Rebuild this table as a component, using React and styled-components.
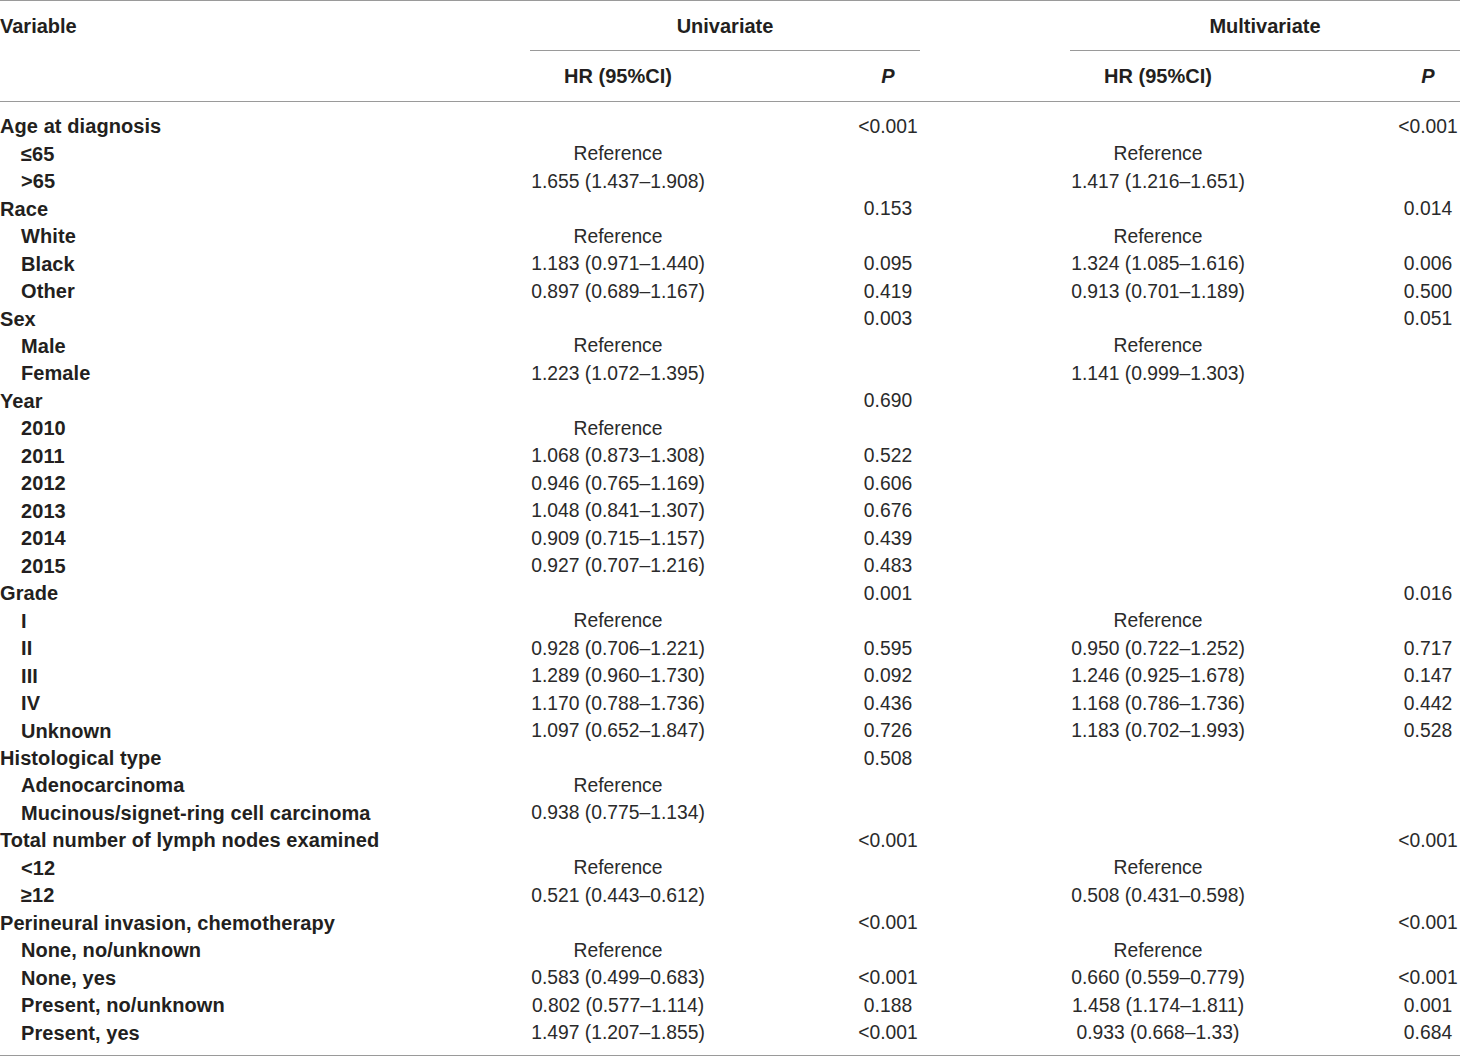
import React from 'react';
import styled, { createGlobalStyle } from 'styled-components';

const GlobalStyle = createGlobalStyle`
  html, body {
    margin: 0;
    padding: 0;
    background: #ffffff;
  }
  body {
    font-family: "Liberation Sans", Arial, Helvetica, sans-serif;
    color: #231f20;
  }
`;

const COLS = '530px 176px 150px 64px 150px 176px 150px 64px';

const Table = styled.div`
  width: 1460px;
  border-top: 1px solid #9a9a9a;
  border-bottom: 1px solid #9a9a9a;
`;

const HeadRow = styled.div`
  display: grid;
  grid-template-columns: ${COLS};
  height: ${(p) => p.h}px;
  border-bottom: ${(p) => (p.ruled ? '1px solid #9a9a9a' : 'none')};
`;

const HeadCell = styled.div`
  grid-column: ${(p) => p.col};
  display: flex;
  align-items: center;
  justify-content: ${(p) => (p.left ? 'flex-start' : 'center')};
  font-size: 20px;
  font-weight: 700;
  font-style: ${(p) => (p.italic ? 'italic' : 'normal')};
  white-space: nowrap;
  padding-top: 1px;
  border-bottom: ${(p) => (p.ruled ? '1px solid #9a9a9a' : 'none')};
`;

const Body = styled.div`
  padding: 11px 0 8px;
`;

const Row = styled.div`
  display: grid;
  grid-template-columns: ${COLS};
  height: 27.48px;
  align-items: center;
`;

const Label = styled.div`
  grid-column: 1;
  padding-left: ${(p) => (p.sub ? 21 : 0)}px;
  font-size: 20px;
  font-weight: 700;
  letter-spacing: 0.08px;
  white-space: nowrap;
`;

const Value = styled.div`
  grid-column: ${(p) => p.col};
  display: flex;
  justify-content: center;
  font-size: 19.3px;
  color: #2a2a2a;
  white-space: nowrap;
`;

const R = 'Reference';

const rows = [
  ['Age at diagnosis', 0, '', '<0.001', '', '<0.001'],
  ['≤65', 1, R, '', R, ''],
  ['>65', 1, '1.655 (1.437–1.908)', '', '1.417 (1.216–1.651)', ''],
  ['Race', 0, '', '0.153', '', '0.014'],
  ['White', 1, R, '', R, ''],
  ['Black', 1, '1.183 (0.971–1.440)', '0.095', '1.324 (1.085–1.616)', '0.006'],
  ['Other', 1, '0.897 (0.689–1.167)', '0.419', '0.913 (0.701–1.189)', '0.500'],
  ['Sex', 0, '', '0.003', '', '0.051'],
  ['Male', 1, R, '', R, ''],
  ['Female', 1, '1.223 (1.072–1.395)', '', '1.141 (0.999–1.303)', ''],
  ['Year', 0, '', '0.690', '', ''],
  ['2010', 1, R, '', '', ''],
  ['2011', 1, '1.068 (0.873–1.308)', '0.522', '', ''],
  ['2012', 1, '0.946 (0.765–1.169)', '0.606', '', ''],
  ['2013', 1, '1.048 (0.841–1.307)', '0.676', '', ''],
  ['2014', 1, '0.909 (0.715–1.157)', '0.439', '', ''],
  ['2015', 1, '0.927 (0.707–1.216)', '0.483', '', ''],
  ['Grade', 0, '', '0.001', '', '0.016'],
  ['I', 1, R, '', R, ''],
  ['II', 1, '0.928 (0.706–1.221)', '0.595', '0.950 (0.722–1.252)', '0.717'],
  ['III', 1, '1.289 (0.960–1.730)', '0.092', '1.246 (0.925–1.678)', '0.147'],
  ['IV', 1, '1.170 (0.788–1.736)', '0.436', '1.168 (0.786–1.736)', '0.442'],
  ['Unknown', 1, '1.097 (0.652–1.847)', '0.726', '1.183 (0.702–1.993)', '0.528'],
  ['Histological type', 0, '', '0.508', '', ''],
  ['Adenocarcinoma', 1, R, '', '', ''],
  ['Mucinous/signet-ring cell carcinoma', 1, '0.938 (0.775–1.134)', '', '', ''],
  ['Total number of lymph nodes examined', 0, '', '<0.001', '', '<0.001'],
  ['<12', 1, R, '', R, ''],
  ['≥12', 1, '0.521 (0.443–0.612)', '', '0.508 (0.431–0.598)', ''],
  ['Perineural invasion, chemotherapy', 0, '', '<0.001', '', '<0.001'],
  ['None, no/unknown', 1, R, '', R, ''],
  ['None, yes', 1, '0.583 (0.499–0.683)', '<0.001', '0.660 (0.559–0.779)', '<0.001'],
  ['Present, no/unknown', 1, '0.802 (0.577–1.114)', '0.188', '1.458 (1.174–1.811)', '0.001'],
  ['Present, yes', 1, '1.497 (1.207–1.855)', '<0.001', '0.933 (0.668–1.33)', '0.684'],
];

export default function App() {
  return (
    <>
      <GlobalStyle />
      <Table>
        <HeadRow h={50}>
          <HeadCell col="1" left>Variable</HeadCell>
          <HeadCell col="2 / 5" ruled>Univariate</HeadCell>
          <HeadCell col="6 / 9" ruled>Multivariate</HeadCell>
        </HeadRow>
        <HeadRow h={50} ruled>
          <HeadCell col="2">HR (95%CI)</HeadCell>
          <HeadCell col="4" italic>P</HeadCell>
          <HeadCell col="6">HR (95%CI)</HeadCell>
          <HeadCell col="8" italic>P</HeadCell>
        </HeadRow>
        <Body>
          {rows.map(([label, sub, hr1, p1, hr2, p2]) => (
            <Row key={label}>
              <Label sub={sub}>{label}</Label>
              <Value col="2">{hr1}</Value>
              <Value col="4">{p1}</Value>
              <Value col="6">{hr2}</Value>
              <Value col="8">{p2}</Value>
            </Row>
          ))}
        </Body>
      </Table>
    </>
  );
}
